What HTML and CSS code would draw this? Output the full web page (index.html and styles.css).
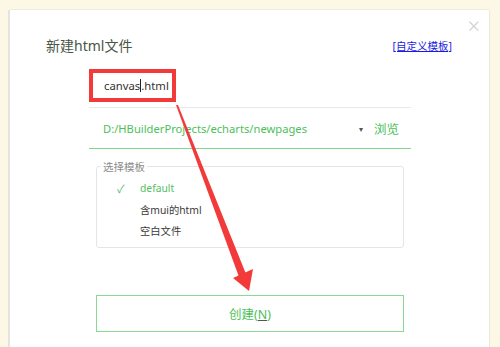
FILE: index.html
```html
<!DOCTYPE html>
<html lang="zh-CN">
<head>
    <meta charset="UTF-8">
    <meta name="viewport" content="width=device-width, initial-scale=1.0">
    <title>新建html文件</title>
    <link rel="stylesheet" href="styles.css">
</head>
<body>

    <div class="dialog">
        <span class="close">&times;</span>

        <div class="dialog-header">
            <div class="dialog-title">新建html文件</div>
            <a class="custom-link" href="#">[自定义模板]</a>
        </div>

        <div class="form">
            <div class="name-row">
                <span class="name-text">canvas<span class="caret"></span>.html</span>
                <span class="mark-box"></span>
            </div>

            <div class="path-row">
                <span class="path-text">D:/HBuilderProjects/echarts/newpages</span>
                <span class="path-drop">&#9662;</span>
                <span class="path-browse">浏览</span>
            </div>

            <fieldset class="template-box">
                <legend>选择模板</legend>
                <ul class="template-list">
                    <li class="active"><span class="check">&#10003;</span>default</li>
                    <li><span class="check"></span>含mui的html</li>
                    <li><span class="check"></span>空白文件</li>
                </ul>
            </fieldset>

            <button class="create-btn">创建(<u>N</u>)</button>
        </div>
    </div>

    <svg class="arrow" width="500" height="347" viewBox="0 0 500 347">
        <polygon points="176,105 178,105 246,274 239,277" fill="#f23a3a"/>
        <polygon points="233,278 253,269 249,291" fill="#f23a3a"/>
    </svg>

</body>
</html>
```

FILE: styles.css
```css
body {
    margin: 0;
    padding: 0;
    background-color: #fdf7e5;
    font-family: "Noto Sans", "Noto Sans CJK SC", sans-serif;
    height: 347px;
    overflow: hidden;
}

.dialog {
    position: relative;
    margin: 10px 0 0 10px;
    width: 479px;
    height: 337px;
    background-color: #ffffff;
    box-shadow: -2px 0 0 #e6e4dc, 1px 0 0 #ebe8dd, 0 -1px 0 #eeebe0;
}

.close {
    position: absolute;
    top: 4px;
    right: 9px;
    font-size: 22px;
    font-weight: 300;
    color: #cfcfcf;
    line-height: 1;
}

.dialog-header {
    display: flex;
    justify-content: space-between;
    align-items: center;
    padding: 25px 37px 0 36px;
}

.dialog-title {
    font-size: 14px;
    color: #4a5548;
}

.custom-link {
    font-size: 10.5px;
    color: #1a1ae0;
    text-decoration: underline;
}

.form {
    width: 322px;
    margin: 14px 0 0 79px;
}

.name-row {
    position: relative;
    display: flex;
    align-items: center;
    height: 38px;
    border-bottom: 1px solid #e8e8e8;
}

.name-text {
    padding-left: 15px;
    padding-bottom: 5px;
    font-size: 11.3px;
    color: #333;
}

.caret {
    display: inline-block;
    width: 1px;
    height: 13px;
    background-color: #222;
    vertical-align: -2px;
}

.mark-box {
    position: absolute;
    left: 0;
    top: 0;
    width: 79px;
    height: 25px;
    border: 4.5px solid #f23a3a;
}

.path-row {
    display: flex;
    align-items: center;
    height: 40px;
    border-bottom: 1px solid #7fd68c;
    padding: 0 12px 0 14px;
}

.path-text {
    flex: 1;
    font-size: 11.2px;
    color: #4cbf5a;
}

.path-drop {
    font-size: 8px;
    color: #555;
    margin-right: 11px;
}

.path-browse {
    font-size: 12.5px;
    color: #4cbf5a;
}

.template-box {
    margin: 10px 7px 0 7px;
    padding: 0 0 5px 0;
    border: 1px solid #e2e6ea;
    border-radius: 3px;
}

.template-box legend {
    margin-left: 4px;
    padding: 0 2px;
    font-size: 10.5px;
    color: #8a8a8a;
}

.template-list {
    list-style: none;
    margin: 0;
    padding: 3px 0 0 20px;
}

.template-list li {
    display: flex;
    align-items: center;
    height: 21.5px;
    font-size: 10.3px;
    color: #3a3a3a;
}

.template-list li.active {
    color: #55c063;
}

.check {
    width: 23px;
    font-size: 11px;
    color: #55c063;
}

.create-btn {
    display: block;
    width: 308px;
    height: 37px;
    margin: 47px 0 0 7px;
    border: 1px solid #8ad896;
    background-color: #ffffff;
    font-family: "Noto Sans", "Noto Sans CJK SC", sans-serif;
    font-size: 12.5px;
    color: #4cbf5a;
}

.create-btn u {
    text-decoration-color: #555;
}

.arrow {
    position: fixed;
    left: 0;
    top: 0;
    pointer-events: none;
}
```
